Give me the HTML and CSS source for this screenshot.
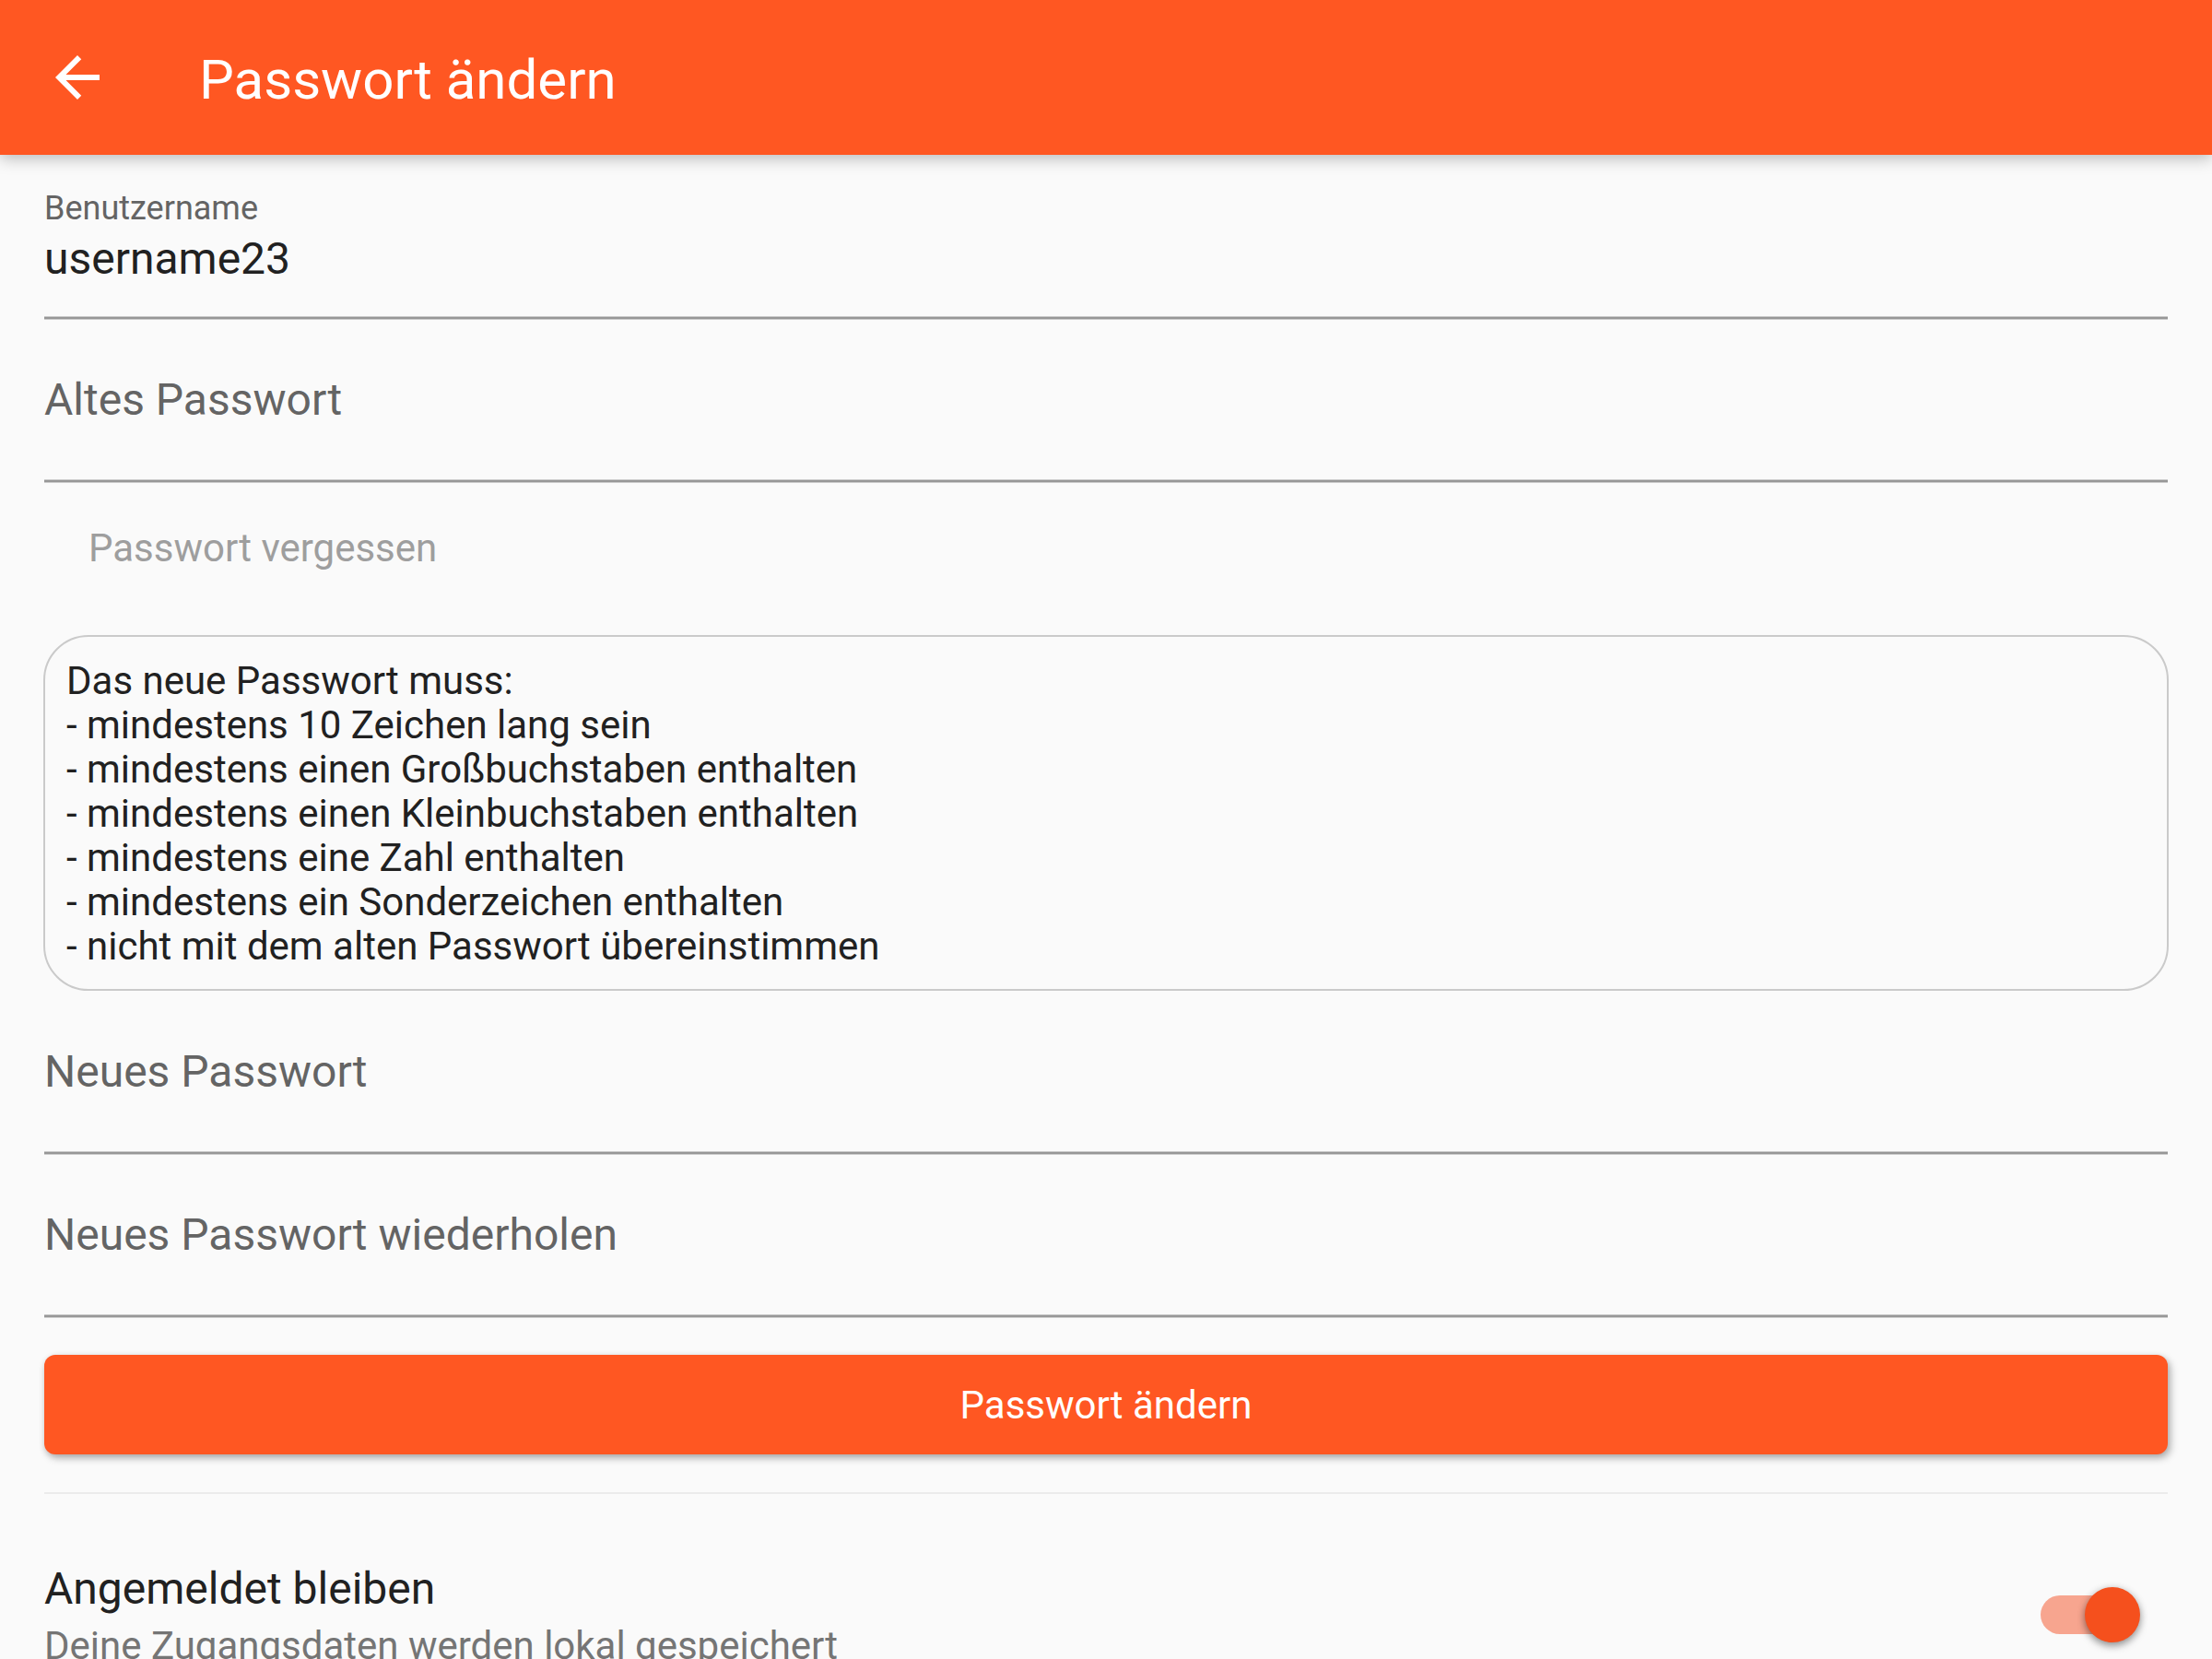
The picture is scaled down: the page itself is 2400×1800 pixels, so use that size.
FILE: index.html
```html
<!DOCTYPE html>
<html lang="de">
<head>
<meta charset="utf-8">
<meta name="viewport" content="width=device-width, initial-scale=1">
<title>Passwort ändern</title>
<link rel="stylesheet" href="styles.css">
</head>
<body>
<div class="app">
  <header class="app-bar">
    <button class="back" type="button" aria-label="Zurück">
      <svg class="back-icon" viewBox="0 0 24 24" aria-hidden="true"><path d="M20 11H7.83l5.59-5.59L12 4l-8 8 8 8 1.41-1.41L7.83 13H20v-2z" fill="currentColor"/></svg>
    </button>
    <h1 class="title">Passwort ändern</h1>
  </header>
  <main class="content">
    <form class="form">
      <div class="field filled">
        <label class="field-label" for="user">Benutzername</label>
        <input class="field-input" id="user" type="text" value="username23">
      </div>
      <div class="field">
        <label class="field-label" for="old">Altes Passwort</label>
        <input class="field-input" id="old" type="password">
      </div>
      <button class="forgot" type="button">Passwort vergessen</button>
      <section class="rules">
        <p>Das neue Passwort muss:</p>
        <p>- mindestens 10 Zeichen lang sein</p>
        <p>- mindestens einen Großbuchstaben enthalten</p>
        <p>- mindestens einen Kleinbuchstaben enthalten</p>
        <p>- mindestens eine Zahl enthalten</p>
        <p>- mindestens ein Sonderzeichen enthalten</p>
        <p>- nicht mit dem alten Passwort übereinstimmen</p>
      </section>
      <div class="field">
        <label class="field-label" for="new">Neues Passwort</label>
        <input class="field-input" id="new" type="password">
      </div>
      <div class="field">
        <label class="field-label" for="repeat">Neues Passwort wiederholen</label>
        <input class="field-input" id="repeat" type="password">
      </div>
      <button class="submit" type="submit">Passwort ändern</button>
    </form>
    <hr class="divider">
    <label class="setting" for="stay">
      <span class="setting-text">
        <span class="setting-title">Angemeldet bleiben</span>
        <span class="setting-note">Deine Zugangsdaten werden lokal gespeichert</span>
      </span>
      <input class="switch" id="stay" type="checkbox" role="switch" checked>
    </label>
  </main>
</div>
</body>
</html>
```
FILE: styles.css
```css
* {
  box-sizing: border-box;
}

body {
  margin: 0;
  background: #fafafa;
  color: #212121;
  font-family: Roboto, sans-serif;
  font-size: 42px;
  line-height: 48px;
}

button,
input {
  margin: 0;
  padding: 0;
  border: 0;
  background: none;
  color: inherit;
  font: inherit;
}

.app {
  display: flex;
  flex-direction: column;
  height: 100vh;
}

.app-bar {
  display: flex;
  flex: none;
  align-items: center;
  gap: 72px;
  height: 168px;
  padding: 0 24px;
  background: #ff5722;
  box-shadow: 0 4px 16px rgba(0, 0, 0, 0.26);
  color: #fff;
  z-index: 1;
}

.back {
  display: flex;
  align-items: center;
  justify-content: center;
  width: 120px;
  height: 120px;
}

.back-icon {
  width: 72px;
  height: 72px;
}

.title {
  margin: 0;
  padding-top: 6px;
  font-size: 60px;
  font-weight: 400;
  line-height: 72px;
}

.content {
  flex: 1;
  min-height: 0;
  overflow-y: auto;
  padding: 2px 48px 48px;
  scrollbar-width: none;
}

.form {
  display: flex;
  flex-direction: column;
}

.field {
  display: grid;
  font-size: 48px;
  line-height: 56px;
}

.field-label,
.field-input {
  grid-area: 1 / 1;
}

.field-label {
  align-self: start;
  justify-self: start;
  margin-top: 59px;
  color: #646464;
  pointer-events: none;
}

.filled .field-label {
  margin-top: 35px;
  font-size: 36px;
  line-height: 42px;
}

.field-input {
  width: 100%;
  height: 177px;
  padding: 82px 0 39px;
  background: linear-gradient(#cacaca 1px, #979797 1px 3px, #cacaca 3px) bottom / 100% 4px no-repeat;
  outline: none;
}

.forgot {
  align-self: flex-start;
  height: 108px;
  margin: 17px 0 40px;
  padding: 0 48px;
  color: #9e9e9e;
}

.rules {
  margin: 0 -1px 1px;
  padding: 24px 23px 22px;
  border: 2px solid #cacaca;
  border-radius: 49px;
}

.rules p {
  margin: 0;
}

.submit {
  height: 108px;
  margin: 40px 0 41px;
  padding-top: 2px;
  border-radius: 12px;
  background: #ff5722;
  box-shadow: 3px 4px 8px rgba(0, 0, 0, 0.28), 0 2px 6px rgba(0, 0, 0, 0.1);
  color: #fff;
}

.divider {
  height: 2px;
  margin: 0;
  border: 0;
  background: #ebebeb;
}

.setting {
  display: flex;
  align-items: center;
  justify-content: space-between;
  padding: 75px 30px 48px 0;
}

.setting-text {
  display: flex;
  flex-direction: column;
  gap: 10px;
}

.setting-title {
  font-size: 48px;
  line-height: 56px;
}

.setting-note {
  color: #757575;
}

.switch {
  position: relative;
  width: 108px;
  height: 60px;
  margin-bottom: 2px;
  appearance: none;
}

.switch::before,
.switch::after {
  content: "";
  position: absolute;
}

.switch::before {
  top: 9px;
  left: 0;
  width: 99px;
  height: 42px;
  border-radius: 21px;
  background: #f7a58f;
}

.switch::after {
  top: 0;
  right: 0;
  width: 60px;
  height: 60px;
  border-radius: 50%;
  background: #f5501d;
  box-shadow: 0 4px 8px rgba(0, 0, 0, 0.35), 0 1px 8px rgba(0, 0, 0, 0.15);
}
```
